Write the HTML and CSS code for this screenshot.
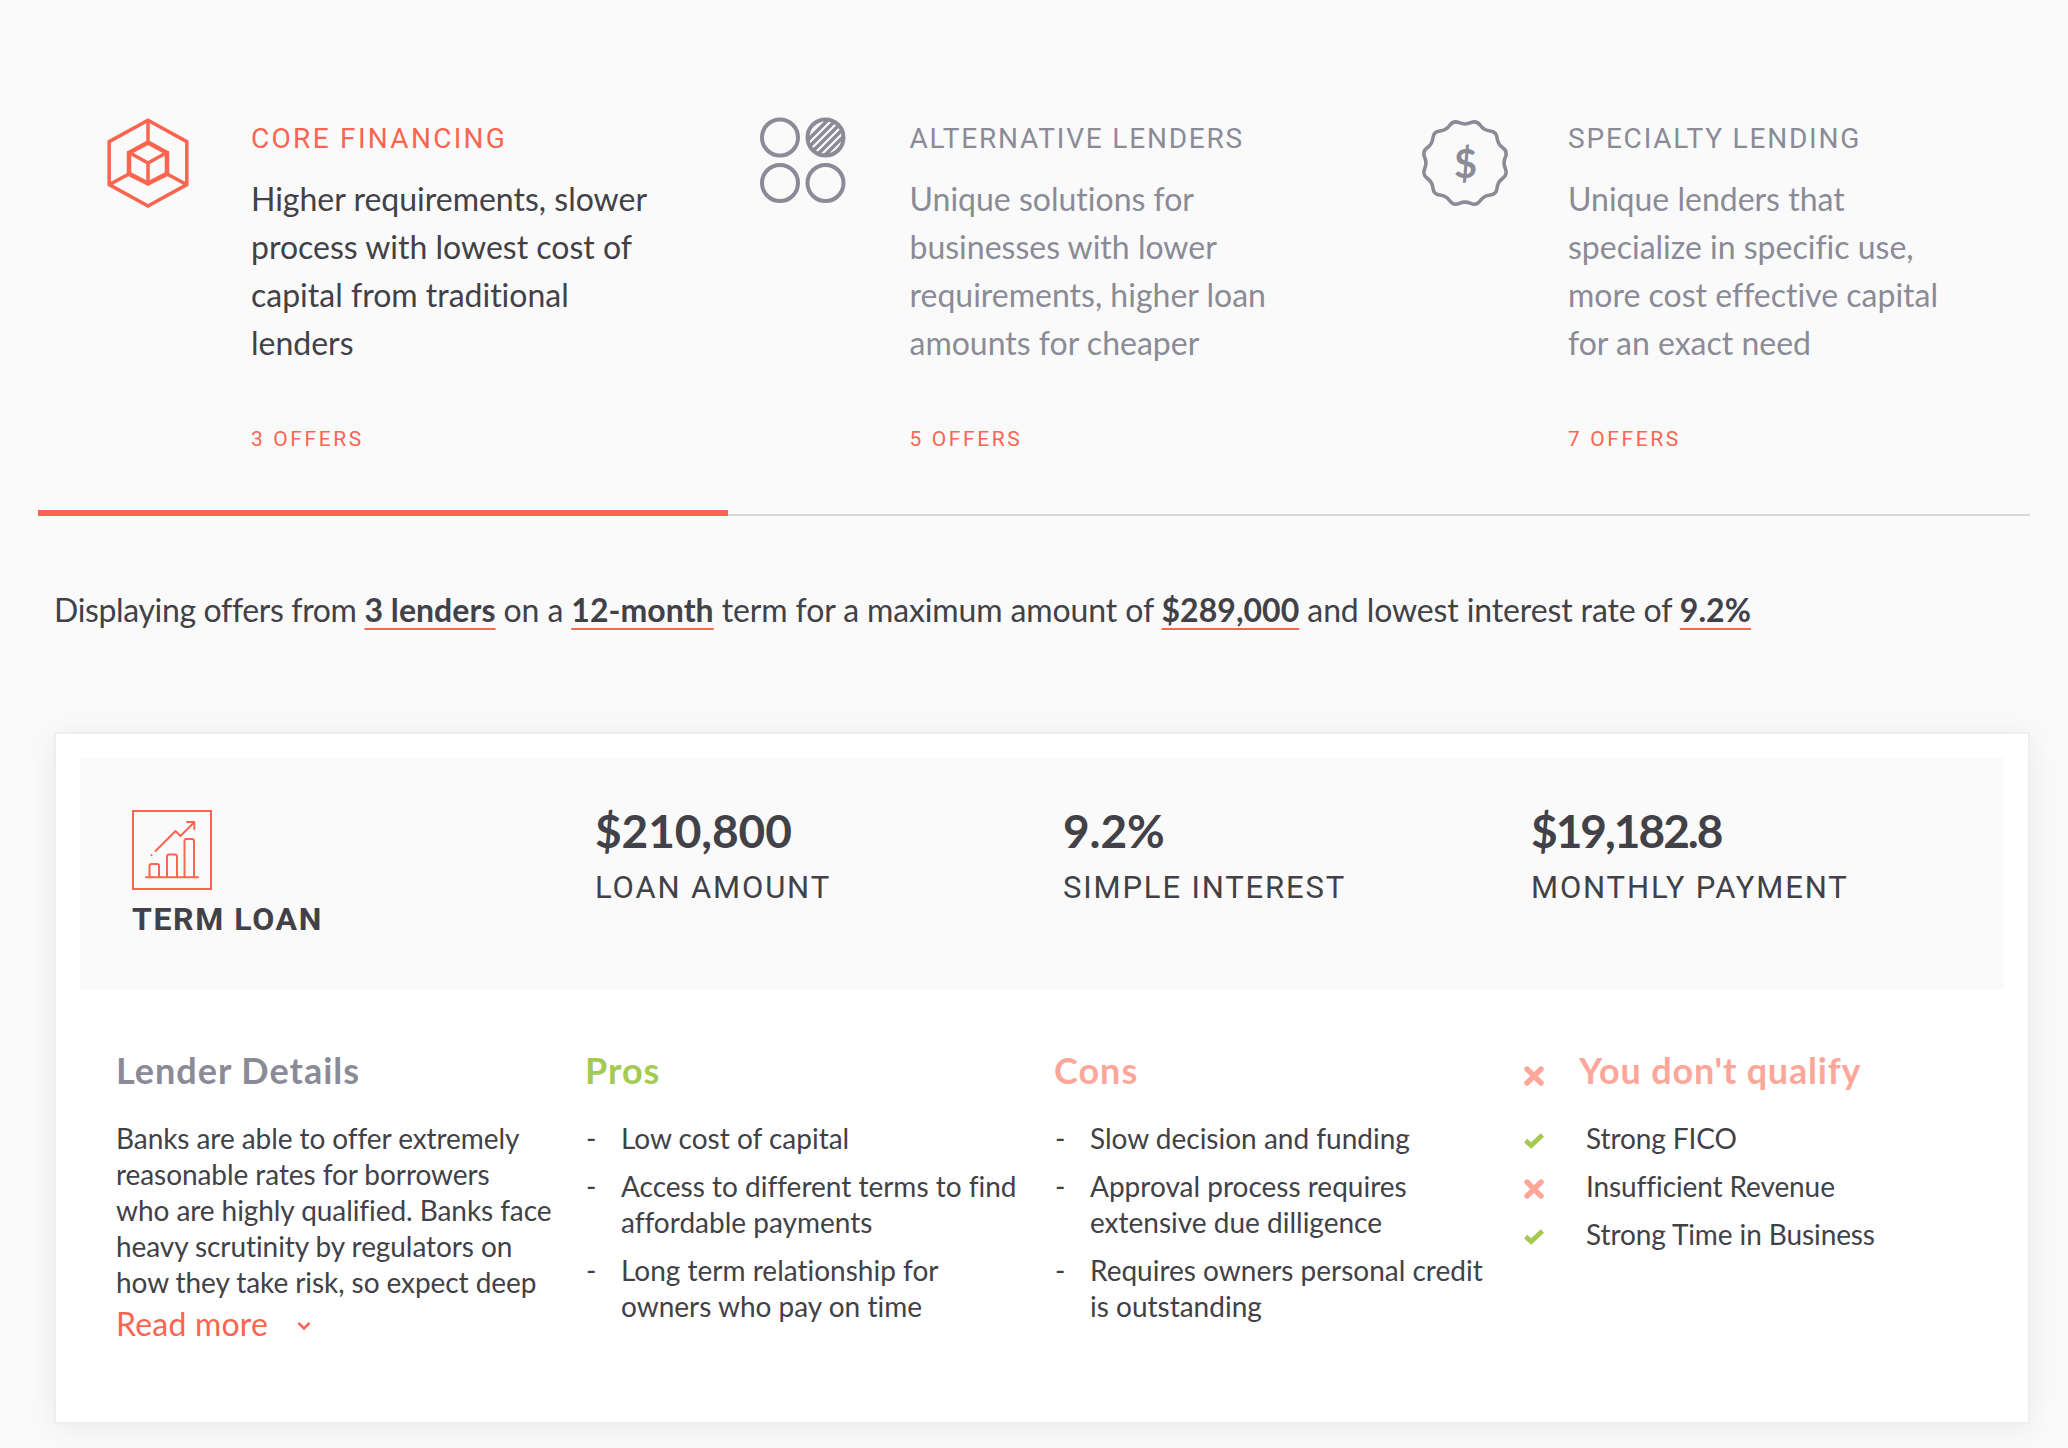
FILE: index.html
```html
<!DOCTYPE html>
<html lang="en">
  <head>
    <meta charset="UTF-8" />
    <meta name="viewport" content="width=device-width, initial-scale=1.0" />
    <title>Loan Offers</title>
    <link rel="stylesheet" href="styles.css">
  </head>
  <body>
    <!-- Icons shared by the qualification list -->
    <svg class="sprite" aria-hidden="true">
      <symbol id="check" viewBox="0 0 20 20">
        <path d="M1.600 9.600 7.200 14.600 18.400 4" fill="none" stroke="#a3cb52" stroke-width="4.800" />
      </symbol>
      <symbol id="cross" viewBox="0 0 20 20">
        <path d="M3 3 17 17M17 3 3 17" fill="none" stroke="#fda79b" stroke-width="5.400" stroke-linecap="round" />
      </symbol>
    </svg>

    <nav class="tabs">
      <div class="tab active">
        <svg class="tab-icon" viewBox="0 0 92 96">
          <g fill="none" stroke="currentColor" stroke-width="3.500">
            <path d="M46 6.200 84.800 27.600V70.600L46 92 7.200 70.600V27.600Z" />
            <path d="M46 6V28M65 60 84.800 70.600M27 60 7.200 70.600" />
            <path d="M28 39 46 49 64 39M46 49V69" />
            <path d="M46 28.600 65 38.800V59.800L46 69.400 27 59.800V38.800Z" stroke-width="4.500" />
          </g>
        </svg>
        <div class="tab-body">
          <h2>Core Financing</h2>
          <p>Higher requirements, slower process with lowest cost of capital from traditional lenders</p>
          <span class="offers">3 Offers</span>
        </div>
      </div>
      <div class="tab">
        <svg class="tab-icon" viewBox="0 0 92 96">
          <clipPath id="disc"><circle cx="64.500" cy="23.500" r="18" /></clipPath>
          <g fill="none" stroke="currentColor" stroke-width="4">
            <path clip-path="url(#disc)" d="M40 33 75-2M40 41 82-1M40 49 90-1M44 53 95 2M50 55 100 5" stroke-width="3.500" />
            <circle cx="19" cy="23.500" r="18" />
            <circle cx="64.500" cy="23.500" r="18" />
            <circle cx="19" cy="69" r="18" />
            <circle cx="64.500" cy="69" r="18" />
          </g>
        </svg>
        <div class="tab-body">
          <h2>Alternative Lenders</h2>
          <p>Unique solutions for businesses with lower requirements, higher loan amounts for cheaper</p>
          <span class="offers">5 Offers</span>
        </div>
      </div>
      <div class="tab">
        <svg class="tab-icon" viewBox="1 1 90 94">
          <path fill="none" stroke="currentColor" stroke-width="3.500" d="M51.6 9.5Q57.3 7 60.9 12Q64.5 17 70.6 17.6Q76.8 18.2 77.4 24.4Q78 30.5 83 34.1Q88 37.7 85.5 43.4Q83 49 85.5 54.6Q88 60.3 83 63.9Q78 67.5 77.4 73.6Q76.8 79.8 70.6 80.4Q64.5 81 60.9 86Q57.3 91 51.6 88.5Q46 86 40.4 88.5Q34.7 91 31.1 86Q27.5 81 21.4 80.4Q15.2 79.8 14.6 73.6Q14 67.5 9 63.9Q4 60.3 6.5 54.6Q9 49 6.5 43.4Q4 37.7 9 34.1Q14 30.5 14.6 24.4Q15.2 18.2 21.4 17.6Q27.5 17 31.1 12Q34.7 7 40.4 9.5Q46 12 51.6 9.5Z" />
          <text class="dollar" x="46.500" y="63.500" text-anchor="middle">$</text>
        </svg>
        <div class="tab-body">
          <h2>Specialty Lending</h2>
          <p>Unique lenders that specialize in specific use, more cost effective capital for an exact need</p>
          <span class="offers">7 Offers</span>
        </div>
      </div>
    </nav>

    <p class="summary"><span>Displaying offers from </span><b>3 lenders</b> on a <b>12-month</b> term for a maximum amount of <b>$289,000</b> and lowest interest rate of <b>9.2%</b></p>

    <section class="card">
      <div class="stats">
        <div class="product">
          <svg class="product-icon" viewBox="0 0 80 80">
            <g fill="none" stroke="currentColor" stroke-width="2" stroke-linecap="round" stroke-linejoin="round">
              <rect x="1" y="1" width="78" height="78" stroke-linejoin="miter" />
              <path d="M14 67.300H66" />
              <path d="M17.500 67V56Q17.500 54 19.500 54H25Q27 54 27 56V67" />
              <path d="M35 67V46.500Q35 44.500 37 44.500H43Q45 44.500 45 46.500V67" />
              <path d="M52.500 67V31Q52.500 29 54.500 29H60Q62 29 62 31V67" />
              <path d="M23.500 41 43.500 21 48.500 26 62 12.500M55 12H62.300V19M19.500 45V45.200" />
            </g>
          </svg>
          <div class="product-name">Term Loan</div>
        </div>
        <div class="stat">
          <div class="value">$210,800</div>
          <div class="label">Loan Amount</div>
        </div>
        <div class="stat">
          <div class="value">9.2%</div>
          <div class="label">Simple Interest</div>
        </div>
        <div class="stat">
          <div class="value tight">$19,182.8</div>
          <div class="label">Monthly Payment</div>
        </div>
      </div>

      <div class="details">
        <div class="column">
          <h3>Lender Details</h3>
          <p>Banks are able to offer extremely reasonable rates for borrowers<br />who are highly qualified. Banks face heavy scrutinity by regulators on how they take risk, so expect deep</p>
          <a class="read-more">Read more
            <svg viewBox="0 0 14 10"><path d="M1.500 2 7 7.500 12.500 2" fill="none" stroke="currentColor" stroke-width="2.600" /></svg>
          </a>
        </div>
        <div class="column">
          <h3 class="pros">Pros</h3>
          <ul>
            <li>Low cost of capital</li>
            <li>Access to different terms to find affordable payments</li>
            <li>Long term relationship for owners who pay on time</li>
          </ul>
        </div>
        <div class="column">
          <h3 class="cons">Cons</h3>
          <ul>
            <li>Slow decision and funding</li>
            <li>Approval process requires extensive due dilligence</li>
            <li>Requires owners personal credit is outstanding</li>
          </ul>
        </div>
        <div class="column qualify">
          <h3 class="cons"><svg><use href="#cross" /></svg>You don't qualify</h3>
          <ul>
            <li><svg><use href="#check" /></svg>Strong FICO</li>
            <li><svg><use href="#cross" /></svg>Insufficient Revenue</li>
            <li><svg><use href="#check" /></svg>Strong Time in Business</li>
          </ul>
        </div>
      </div>
    </section>
  </body>
</html>
```
FILE: styles.css
```css
:root {
  --accent: #fb6550;
  --text: #414147;
  --muted: #8b8b97;
  --good: #a3cb52;
  --bad: #fda79b;
  --caps: Roboto, sans-serif;
}

* {
  box-sizing: border-box;
}

body {
  margin: 0;
  padding: 114px 38px 24px;
  background-color: #fafafa;
  color: var(--text);
  font-family: Lato, sans-serif;
  font-size: 32px;
  font-variant-ligatures: none;
  line-height: 48px;
}

h2,
h3,
p,
ul {
  margin: 0;
  padding: 0;
  font-weight: normal;
}

.sprite {
  display: none;
}

/* Tabs */
.tabs {
  display: grid;
  grid-template-columns: repeat(3, 658.5px);
  height: 402px;
  padding-left: 32px;
  border-bottom: 2px solid #d9d9db;
}

.tab {
  position: relative;
  display: flex;
  align-items: flex-start;
  gap: 57px;
  padding-left: 32px;
  color: var(--muted);
}

.tab.active::after {
  content: "";
  position: absolute;
  left: -32px;
  right: 1px;
  bottom: -2px;
  height: 6px;
  background-color: var(--accent);
}

.tab-icon {
  flex: none;
  width: 92px;
  height: 96px;
  overflow: visible;
}

.dollar {
  fill: currentColor;
  font-size: 39px;
  font-weight: 700;
}

.tab-body {
  width: 410px;
  padding-top: 5px;
}

.tab h2 {
  margin-bottom: 16px;
  font-family: var(--caps);
  font-size: 28px;
  line-height: 40px;
  letter-spacing: 1.8px;
  text-transform: uppercase;
  white-space: nowrap;
}

.tab.active h2 {
  letter-spacing: 2.3px;
}

.tab.active h2,
.tab.active .tab-icon {
  color: var(--accent);
}

.tab.active p {
  color: var(--text);
}

.offers {
  display: block;
  margin-top: 56px;
  color: var(--accent);
  font-family: var(--caps);
  font-size: 21px;
  line-height: 32px;
  letter-spacing: 2.6px;
  text-transform: uppercase;
}

/* Summary line */
.summary {
  margin: 70px 0 98px 16px;
  letter-spacing: -0.12px;
  white-space: nowrap;
}

.summary span {
  letter-spacing: -0.35px;
}

.summary b {
  letter-spacing: 0.05px;
  text-decoration: underline 2px var(--accent);
  text-decoration-skip-ink: none;
  text-underline-offset: 6px;
}

/* Offer card */
.card {
  width: 1976px;
  height: 692px;
  margin-left: 16px;
  padding: 24px;
  border: 2px solid #efefef;
  background-color: #fff;
  box-shadow: 0 4px 30px rgba(0, 0, 0, 0.07);
}

.stats {
  display: grid;
  grid-template-columns: repeat(4, 468px);
  height: 232px;
  padding: 49px 0 0 47px;
  background-color: #fafafa;
}

.product {
  padding: 3px 0 0 5px;
}

.product-icon {
  display: block;
  width: 80px;
  height: 80px;
  color: var(--accent);
}

.product-name {
  margin-top: 5px;
  font-family: var(--caps);
  font-weight: 700;
  letter-spacing: 1.6px;
  text-transform: uppercase;
}

.value {
  margin-bottom: 9px;
  font-size: 46px;
  font-weight: 700;
  letter-spacing: -0.1px;
}

.value.tight {
  letter-spacing: -2px;
}

.label {
  font-family: var(--caps);
  font-size: 31px;
  letter-spacing: 1.85px;
  text-transform: uppercase;
}

/* Lender details, pros and cons */
.details {
  display: grid;
  grid-template-columns: repeat(4, 469px);
  margin-top: 56px;
  padding-left: 36px;
}

.column {
  padding-right: 30px;
  font-size: 28px;
  line-height: 36px;
}

.column p {
  letter-spacing: -0.07px;
}

h3 {
  margin-bottom: 26px;
  color: var(--muted);
  font-size: 36px;
  font-weight: 700;
  line-height: 48px;
  letter-spacing: 1px;
}

.pros {
  color: var(--good);
}

.cons {
  color: var(--bad);
}

.read-more {
  display: flex;
  align-items: center;
  gap: 29px;
  color: var(--accent);
  font-size: 32px;
  line-height: 48px;
  letter-spacing: 0.2px;
}

.read-more svg {
  width: 14px;
  height: 10px;
  margin-top: 4px;
}

ul {
  list-style: none;
}

li {
  display: flex;
  margin-bottom: 12px;
}

li::before {
  content: "-";
  flex: none;
  width: 35px;
  margin-left: 1px;
}

.qualify h3 {
  display: flex;
  align-items: center;
  gap: 35px;
  letter-spacing: 0.8px;
}

.qualify h3 svg {
  margin-top: 12px;
}

.qualify li {
  align-items: center;
  gap: 42px;
  letter-spacing: -0.1px;
}

.qualify li::before {
  content: none;
}

.qualify svg {
  flex: none;
  width: 20px;
  height: 20px;
  margin-top: 5px;
  margin-left: 1px;
}
```
